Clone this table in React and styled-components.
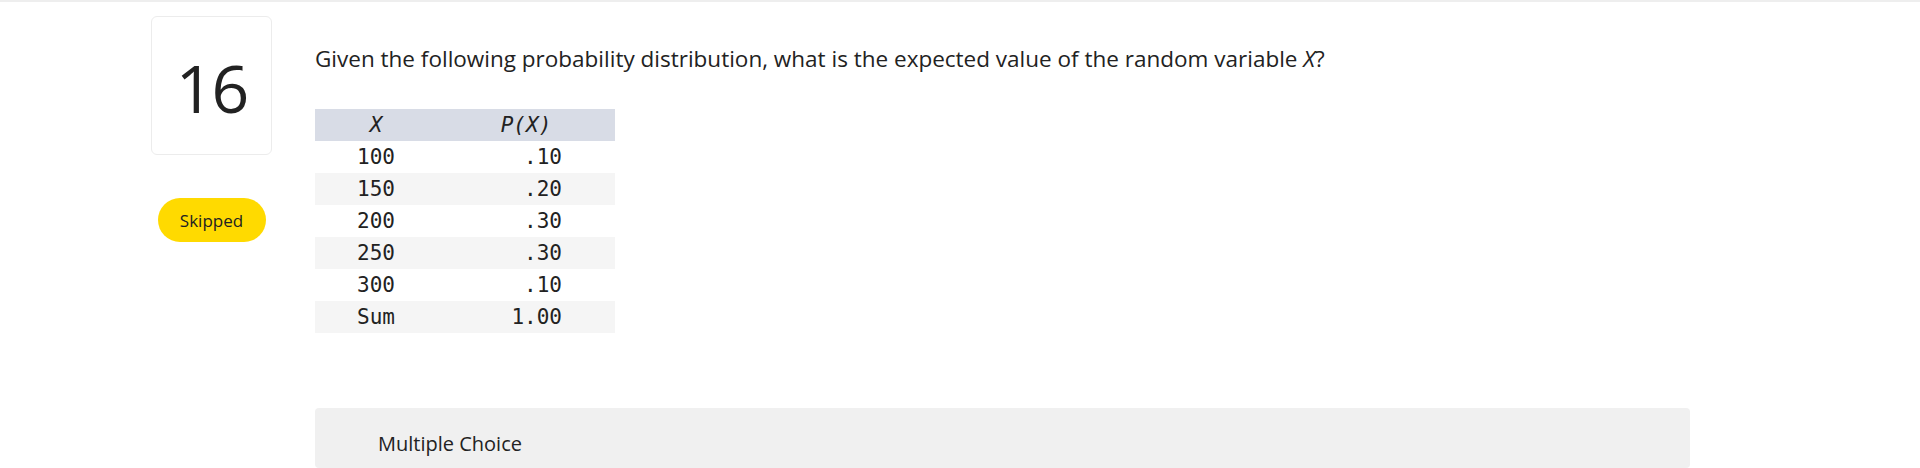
import styled, { createGlobalStyle } from "styled-components";

const GlobalStyle = createGlobalStyle`
  html, body {
    margin: 0;
    padding: 0;
    background: #fff;
  }
  body {
    font-family: "Open Sans", Lato, Arial, sans-serif;
    color: #222;
    border-top: 2px solid #eeeeee;
  }
`;

const rows = [
  ["100", ".10"],
  ["150", ".20"],
  ["200", ".30"],
  ["250", ".30"],
  ["300", ".10"],
  ["Sum", "1.00"],
];

const App = () => {
  return (
    <>
      <GlobalStyle />
      <StQuestion>
        <StAside>
          <div className="number">16</div>
          <div className="status">Skipped</div>
        </StAside>
        <StBody>
          <p className="prompt">
            Given the following probability distribution, what is the expected
            value of the random variable <i>X</i>?
          </p>
          <StTable>
            <div className="head">
              <span>X</span>
              <span>P(X)</span>
            </div>
            {rows.map(([x, p], idx) => (
              <StRow key={x} $striped={idx % 2 === 1}>
                <span className="x">{x}</span>
                <span className="p">{p}</span>
              </StRow>
            ))}
          </StTable>
          <StChoices>
            <div className="label">Multiple Choice</div>
          </StChoices>
        </StBody>
      </StQuestion>
    </>
  );
};

const StQuestion = styled.div`
  display: flex;
  gap: 43px;
  padding-top: 14px;
  padding-left: 151px;
  height: 452px;
  overflow: hidden;
`;

const StAside = styled.div`
  width: 121px;
  flex-shrink: 0;
  display: flex;
  flex-direction: column;
  align-items: center;
  gap: 43px;

  .number {
    box-sizing: border-box;
    width: 121px;
    height: 139px;
    display: flex;
    justify-content: center;
    align-items: center;
    border: 1px solid #ececec;
    border-radius: 6px;
    font-size: 66px;
    letter-spacing: -2px;
    color: #222;
    padding-top: 3px;
  }

  .status {
    width: 108px;
    height: 44px;
    display: flex;
    justify-content: center;
    align-items: center;
    border-radius: 22px;
    background: #ffda00;
    font-size: 17px;
    color: #222;
  }
`;

const StBody = styled.div`
  width: 1375px;
  flex-shrink: 0;
  display: flex;
  flex-direction: column;

  .prompt {
    margin: 28px 0 35px;
    font-size: 22.5px;
    line-height: 30px;
    color: #222;

    i {
      font-style: italic;
    }
  }
`;

const StTable = styled.div`
  width: 300px;
  font-family: "DejaVu Sans Mono", "Liberation Mono", monospace;
  font-size: 21px;
  color: #222;

  .head {
    display: grid;
    grid-template-columns: 122px 178px;
    height: 32px;
    align-items: center;
    background: #d8dce6;
    font-style: italic;
    text-align: center;
  }
`;

const StRow = styled.div`
  display: grid;
  grid-template-columns: 122px 178px;
  height: 32px;
  align-items: center;
  background: ${(props) => (props.$striped ? "#f5f5f5" : "#fff")};

  .x {
    text-align: center;
  }

  .p {
    text-align: right;
    padding-right: 53px;
  }
`;

const StChoices = styled.div`
  margin-top: 75px;
  height: 80px;
  padding: 0 63px;
  background: #f0f0f0;
  border-radius: 4px;

  .label {
    padding-top: 22px;
    font-size: 20px;
    line-height: 28px;
    color: #222;
  }
`;

export default App;
